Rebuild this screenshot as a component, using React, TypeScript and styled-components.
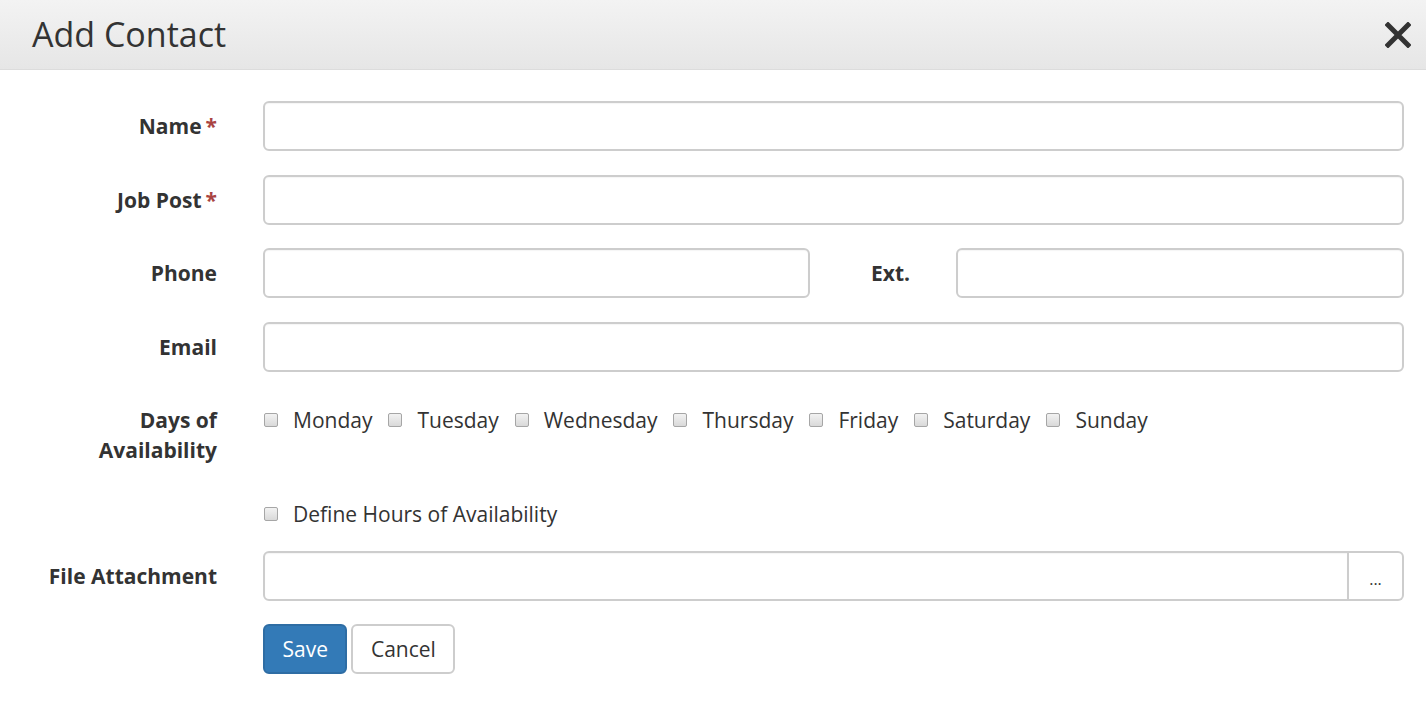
import React from "react";
import styled, { createGlobalStyle } from "styled-components";

const Global = createGlobalStyle`
  html, body { margin: 0; padding: 0; background: #fff; }
  body { font-family: "Open Sans", "Liberation Sans", Arial, sans-serif; color: #333; }
  * { box-sizing: border-box; }
`;

const Header = styled.div`
  height: 70px;
  display: flex;
  align-items: center;
  justify-content: space-between;
  padding: 0 15px 0 32px;
  background: linear-gradient(#f3f3f3, #e6e6e6);
  border-bottom: 1px solid #dcdcdc;
`;

const Title = styled.h1`
  margin: 0;
  font-size: 34px;
  font-weight: 400;
  color: #333;
  line-height: 1;
  padding-bottom: 2px;
`;

const CloseButton = styled.button`
  border: 0;
  background: transparent;
  padding: 0;
  width: 26px;
  height: 26px;
  display: flex;
  cursor: pointer;
`;

const Form = styled.form`
  padding: 31px 22px 0 0;
`;

const Row = styled.div<{ $cols?: string; $mb?: number }>`
  display: grid;
  grid-template-columns: ${(p) => p.$cols ?? "217px 1fr"};
  column-gap: 46px;
  align-items: start;
  margin-bottom: ${(p) => p.$mb ?? 23.5}px;
`;

const Label = styled.label`
  text-align: right;
  font-weight: 700;
  font-size: 21px;
  line-height: 30px;
  padding-top: 10px;
  color: #333;
`;

const Required = styled.span`
  color: #a94442;
  margin-left: 4px;
`;

const Input = styled.input`
  height: 50px;
  width: 100%;
  border: 2px solid #cdcdcd;
  border-radius: 6px;
  font-family: inherit;
  font-size: 20px;
  padding: 0 16px;
  box-shadow: inset 0 1px 1px rgba(0, 0, 0, 0.04);
  outline: none;
`;

const Checks = styled.div`
  display: flex;
  flex-wrap: wrap;
  align-items: center;
  align-content: flex-start;
  padding-top: 10px;
  min-height: 40px;
`;

const CheckItem = styled.label`
  display: flex;
  align-items: center;
  font-size: 21px;
  line-height: 30px;
  color: #333;
  margin-right: 15px;
`;

const Box = styled.input`
  appearance: none;
  -webkit-appearance: none;
  width: 14px;
  height: 14px;
  margin: 0 15px 0 1px;
  border: 1px solid #a6a6a6;
  border-radius: 2px;
  background: linear-gradient(#f2f2f2, #d9d9d9);
`;

const InputGroup = styled.div`
  display: flex;
  height: 50px;
`;

const GroupInput = styled(Input)`
  border-radius: 6px 0 0 6px;
  flex: 1;
`;

const GroupButton = styled.button`
  width: 55px;
  height: 50px;
  border: 2px solid #cdcdcd;
  border-left: 0;
  border-radius: 0 6px 6px 0;
  background: #fff;
  font-family: inherit;
  font-size: 16px;
  color: #333;
  padding: 6px 0 0;
`;

const Actions = styled.div`
  display: flex;
  gap: 4px;
`;

const Button = styled.button<{ $primary?: boolean }>`
  height: 50px;
  padding: 0 17.5px;
  font-family: inherit;
  font-size: 21px;
  border-radius: 6px;
  border: 2px solid ${(p) => (p.$primary ? "#2e6da4" : "#cdcdcd")};
  background: ${(p) => (p.$primary ? "#337ab7" : "#fff")};
  color: ${(p) => (p.$primary ? "#fff" : "#333")};
  cursor: pointer;
`;

const days = ["Monday", "Tuesday", "Wednesday", "Thursday", "Friday", "Saturday", "Sunday"];

export default function App() {
  return (
    <>
      <Global />
      <Header>
        <Title>Add Contact</Title>
        <CloseButton type="button" aria-label="Close">
          <svg width="26" height="26" viewBox="0 0 26 26">
            <path d="M3 3 L23 23 M23 3 L3 23" stroke="#333" strokeWidth="5" strokeLinecap="square" />
          </svg>
        </CloseButton>
      </Header>
      <Form>
        <Row>
          <Label>
            Name<Required>*</Required>
          </Label>
          <Input />
        </Row>
        <Row>
          <Label>
            Job Post<Required>*</Required>
          </Label>
          <Input />
        </Row>
        <Row $cols="217px 547px 54px 1fr">
          <Label>Phone</Label>
          <Input />
          <Label>Ext.</Label>
          <Input />
        </Row>
        <Row>
          <Label>Email</Label>
          <Input />
        </Row>
        <Row>
          <Label>
            Days of
            <br />
            Availability
          </Label>
          <Checks>
            {days.map((d) => (
              <CheckItem key={d}>
                <Box type="checkbox" />
                {d}
              </CheckItem>
            ))}
          </Checks>
        </Row>
        <Row $mb={22}>
          <div />
          <Checks>
            <CheckItem>
              <Box type="checkbox" />
              Define Hours of Availability
            </CheckItem>
          </Checks>
        </Row>
        <Row $mb={23}>
          <Label>File Attachment</Label>
          <InputGroup>
            <GroupInput />
            <GroupButton type="button">...</GroupButton>
          </InputGroup>
        </Row>
        <Row>
          <div />
          <Actions>
            <Button type="button" $primary>
              Save
            </Button>
            <Button type="button">Cancel</Button>
          </Actions>
        </Row>
      </Form>
    </>
  );
}
